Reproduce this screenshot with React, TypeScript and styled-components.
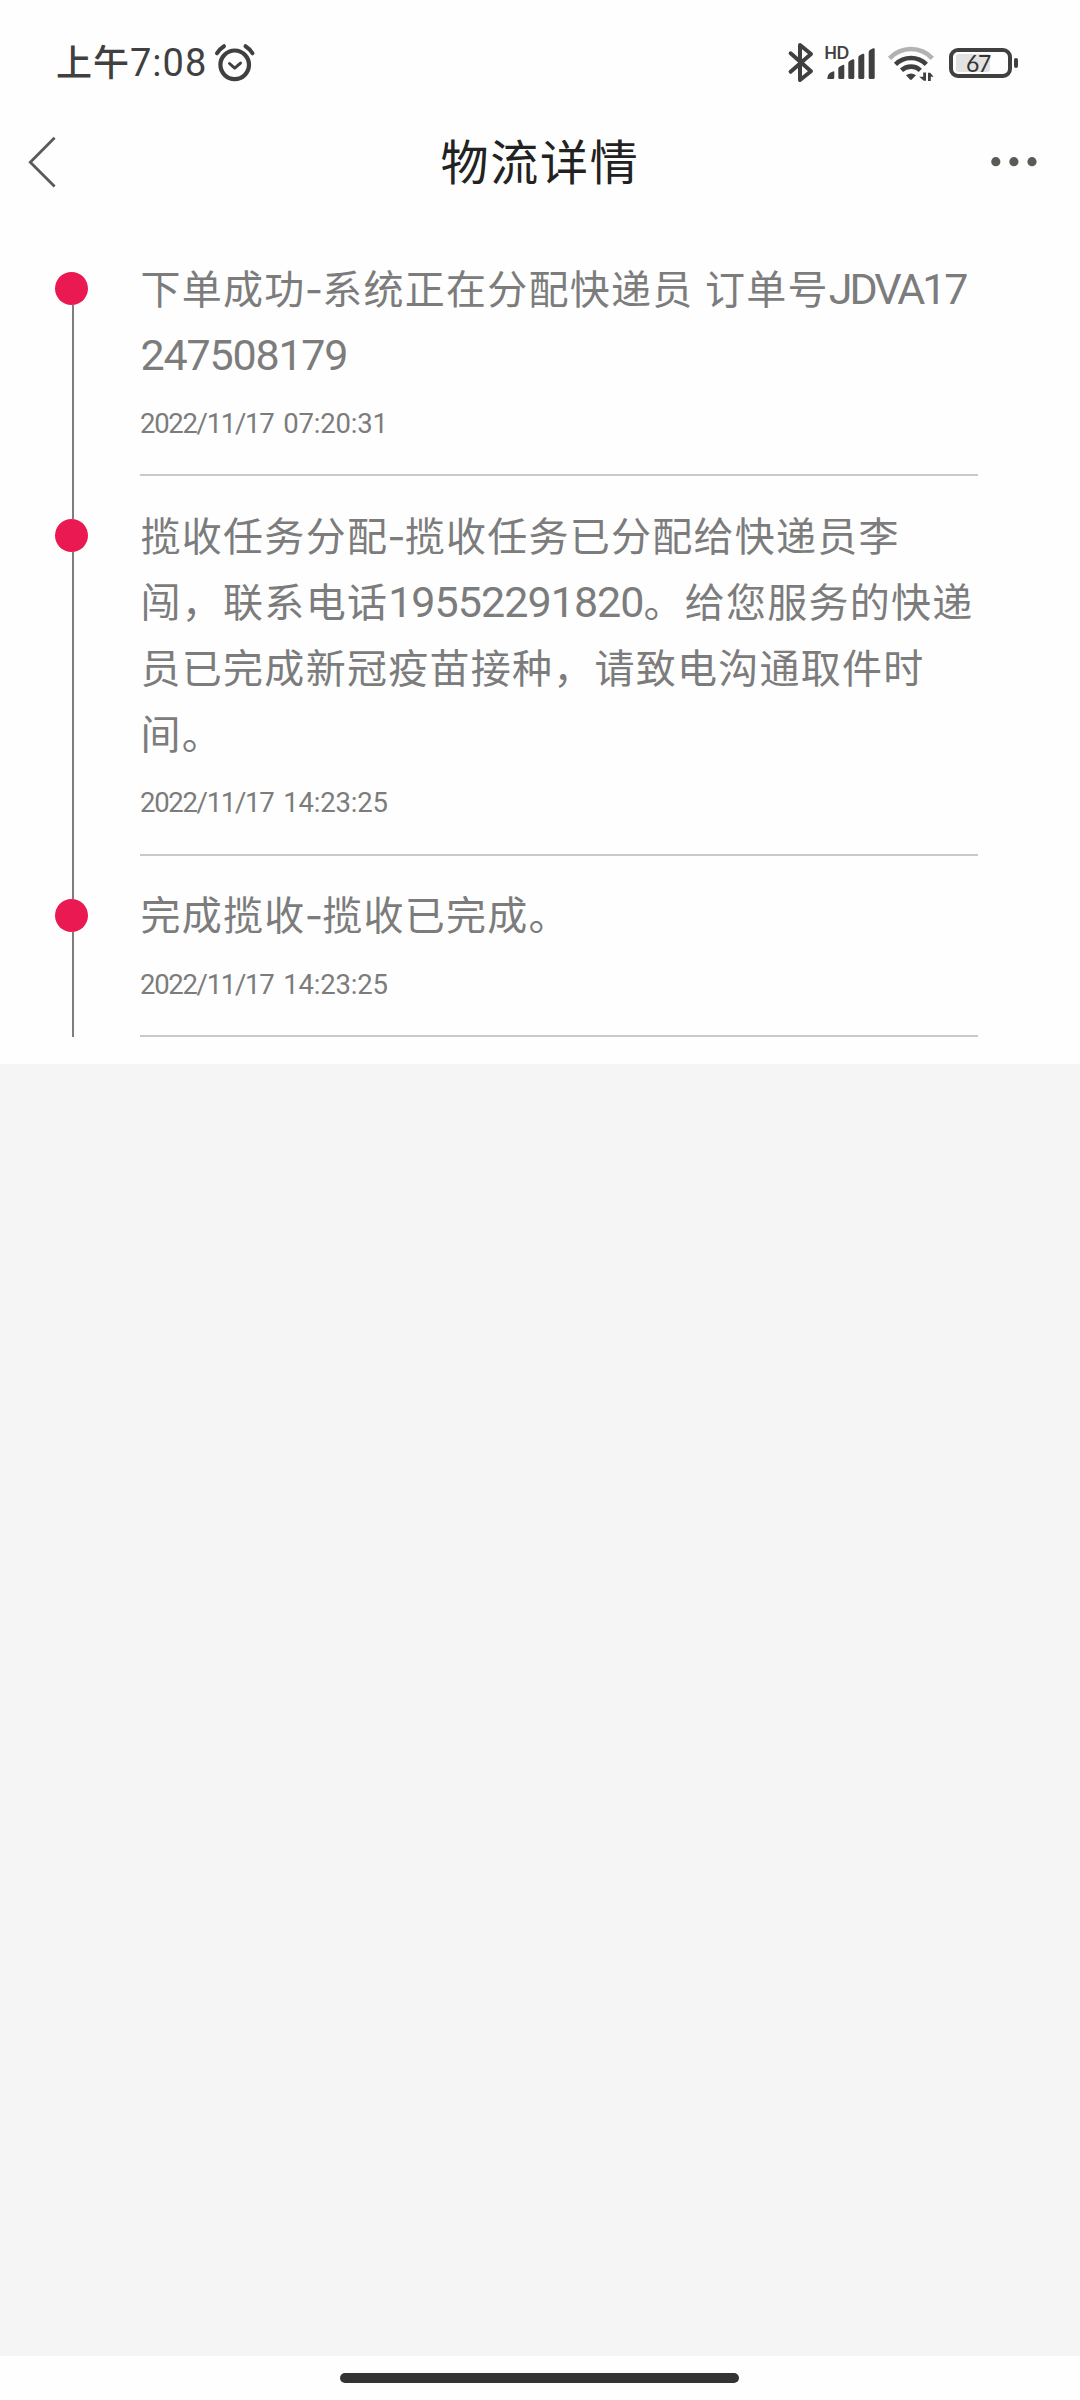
import React from 'react';
import styled, { createGlobalStyle } from 'styled-components';

const GlobalStyle = createGlobalStyle`
  * { box-sizing: border-box; }
  body {
    margin: 0;
    background: #f5f5f5;
    font-family: 'Noto Sans CJK SC', sans-serif;
  }
`;

const Screen = styled.div`
  width: 1080px;
  height: 2400px;
  display: flex;
  flex-direction: column;
  background: #f5f5f5;
  overflow: hidden;
`;

const StatusBar = styled.header`
  height: 110px;
  flex: none;
  display: flex;
  align-items: flex-start;
  justify-content: space-between;
  padding: 38px 62px 0 56px;
  background: #fefefe;
  color: #404040;
`;

const StatusGroup = styled.div`
  display: flex;
  align-items: center;
  height: 50px;
`;

const Clock = styled.div`
  display: flex;
  align-items: baseline;
  height: 50px;
  line-height: 45px;
  margin-right: 7px;
  font-size: 36px;
  letter-spacing: 1px;
  font-weight: 500;
  white-space: nowrap;
`;

const ClockDigits = styled.span`
  font-family: Roboto, sans-serif;
  font-size: 38px;
  font-weight: 400;
  letter-spacing: 1px;
`;

const Battery = styled.div`
  width: 63px;
  height: 30px;
  margin-left: 15px;
  border: 4px solid #404040;
  border-radius: 9px;
  padding: 2px 3px;
  display: flex;
`;

const BatteryFill = styled.div`
  width: 34px;
  height: 18px;
  border-radius: 3px;
  background: #e2e2e2;
  display: flex;
  justify-content: flex-end;
  align-items: center;
  font-family: Lato, sans-serif;
  font-size: 23px;
  letter-spacing: -1.4px;
  line-height: 18px;
  color: #333;
`;

const BatteryNub = styled.div`
  width: 4px;
  height: 10px;
  margin-left: 2px;
  border-radius: 2px;
  background: #404040;
`;

const NavBar = styled.nav`
  height: 119px;
  flex: none;
  display: grid;
  grid-template-columns: 120px 1fr 120px;
  align-items: start;
  background: #fefefe;
`;

const NavSlot = styled.div<{ $end?: boolean }>`
  height: 104px;
  display: flex;
  align-items: center;
  justify-content: ${(p) => (p.$end ? 'flex-end' : 'flex-start')};
  padding: ${(p) => (p.$end ? '0 43px 0 0' : '0 0 0 26px')};
`;

const Title = styled.h1`
  margin: 0;
  height: 104px;
  line-height: 98px;
  font-size: 48px;
  font-weight: 400;
  letter-spacing: 1.8px;
  text-align: center;
  color: #222;
`;

const Timeline = styled.main`
  height: 835px;
  flex: none;
  background: #fefefe;
`;

const Item = styled.section`
  display: grid;
  grid-template-columns: 140px 838px;
`;

const Rail = styled.div<{ $first: boolean }>`
  display: flex;
  flex-direction: column;
  margin-left: 55px;
  width: 36px;
  &::before {
    content: '';
    height: 43px;
    width: 2px;
    margin-left: 17px;
    background: ${(p) => (p.$first ? 'transparent' : '#7e7e7e')};
  }
  &::after {
    content: '';
    flex: 1;
    width: 2px;
    margin-left: 17px;
    background: #7e7e7e;
  }
`;

const Dot = styled.span`
  width: 33px;
  height: 33px;
  border-radius: 50%;
  background: #eb1951;
`;

const Body = styled.div`
  padding: 24.6px 0 30.3px;
  border-bottom: 2px solid #c9c9c9;
`;

const Line = styled.p`
  margin: 0;
  padding-left: 0.6px;
  height: 66px;
  line-height: 66px;
  font-size: 40px;
  letter-spacing: 1.26px;
  color: #7c7c7c;
  white-space: pre;
`;

const Latin = styled.span<{ $spacing: number }>`
  font-family: Roboto, sans-serif;
  font-size: 43px;
  line-height: 1;
  letter-spacing: ${(p) => p.$spacing}px;
`;

const Dash = styled.span`
  display: inline-block;
  width: 16.5px;
  line-height: 1;
  font-family: Inter, sans-serif;
  letter-spacing: 0;
  text-indent: -1px;
`;

const Time = styled.time`
  display: flex;
  gap: 10px;
  height: 40px;
  margin-top: 18.4px;
  line-height: 40px;
  font-family: Roboto, sans-serif;
  font-size: 27.5px;
  color: #7c7c7c;
`;

const Day = styled.span`
  letter-spacing: -1.3px;
`;

const Hour = styled.span`
  letter-spacing: -0.2px;
`;

const Spacer = styled.div`
  flex: 1;
`;

const HomeBar = styled.footer`
  height: 44px;
  flex: none;
  display: flex;
  justify-content: center;
  padding: 17px 1px 0 0;
  background: #fefefe;
`;

const HomeHandle = styled.div`
  width: 399px;
  height: 10px;
  border-radius: 5px;
  background: #333;
`;

const HdText = styled.text`
  font-family: Lato, sans-serif;
  font-size: 16.5px;
  font-weight: 700;
  letter-spacing: -0.5px;
`;

type Part = string | [string, number];

const records: { lines: Part[][]; day: string; hour: string }[] = [
  {
    lines: [
      ['下单成功', '-', '系统正在分配快递员', [' ', 0.9], '订单号', ['JDVA', -3], ['17', -2]],
      [['247508179', -1.2]],
    ],
    day: '2022/11/17',
    hour: '07:20:31',
  },
  {
    lines: [
      ['揽收任务分配', '-', '揽收任务已分配给快递员李'],
      ['闯，联系电话', ['19552291820', -0.95], '。给您服务的快递'],
      ['员已完成新冠疫苗接种，请致电沟通取件时'],
      ['间。'],
    ],
    day: '2022/11/17',
    hour: '14:23:25',
  },
  {
    lines: [['完成揽收', '-', '揽收已完成。']],
    day: '2022/11/17',
    hour: '14:23:25',
  },
];

const AlarmIcon = () => (
  <svg width="42" height="40" viewBox="0 0 42 40" fill="none" stroke="#404040" strokeLinecap="round">
    <circle cx="20.7" cy="21.8" r="14.3" strokeWidth="4.2" />
    <path d="M15.500 20.500l5.200 4.600 5.800-5" strokeWidth="3" strokeLinejoin="round" />
    <path d="M3 10.300Q5.500 6 10 3.200M31.500 3.200Q36 6 38.500 10.300" strokeWidth="4" />
  </svg>
);

const StatusIcons = () => (
  <svg width="150" height="50" viewBox="784 38 150 50" fill="#404040" overflow="visible">
    <path
      d="M790.6 53.3L811 71.3 800 80V45L811 54 790.6 71.8"
      fill="none"
      stroke="#404040"
      strokeWidth="4"
      strokeLinecap="round"
      strokeLinejoin="round"
    />
    <HdText x="824.3" y="59.3">HD</HdText>
    <path d="M827.3 79q0-6 5-7.300q2-.7 2-.2V77.500q0 1.500-1.500 1.500z" />
    <path d="M838.300 68.500q0-1.500 1.500-2l3-1.500q1.500-.5 1.500.8V77.500q0 1.500-1.500 1.500h-3q-1.500 0-1.500-1.500z" />
    <path d="M848.300 63q0-1.500 1.500-2.200l3-1.500q1.500-.5 1.500.8V77.500q0 1.500-1.500 1.500h-3q-1.500 0-1.500-1.500z" />
    <path d="M858.300 57.500q0-1.500 1.500-2.200l3-1.500q1.500-.5 1.500.8V77.500q0 1.500-1.500 1.500h-3q-1.500 0-1.500-1.500z" />
    <path d="M868.700 52q0-1.500 1.500-2.200l3-1.500q1.500-.5 1.500.8V77.500q0 1.500-1.500 1.500h-3q-1.500 0-1.500-1.500z" />
    <g fill="none" strokeWidth="4.600">
      <path d="M889.500 58.300Q898.500 49 911 49T932.300 58.300" stroke="#b2b2b2" />
      <path d="M895.500 64.300Q902 58 911 58T926.300 64.300" stroke="#404040" />
      <path d="M901.500 70.300Q905.500 66.600 911 66.600T920.300 70.300" stroke="#404040" />
    </g>
    <path d="M906 75.300Q911 71.500 916 75.300L911.800 79.500q-.9.800-1.800 0z" />
    <path d="M926 72.500v8.300h-2.200l-4.600-4h4V72.500z" />
    <path d="M928 81v-8.300h2.200l3.400 4h-2.800V81z" />
  </svg>
);

const BackIcon = () => (
  <svg width="34" height="54" viewBox="26 134 34 54" fill="none" stroke="#5a5a5a" strokeWidth="2.800">
    <path d="M54.600 136.800L30.300 161.200 54.600 185.400" />
  </svg>
);

const MoreIcon = () => (
  <svg width="46" height="12" viewBox="0 0 46 12" fill="#5b5b56">
    <circle cx="4.800" cy="5.700" r="4.600" />
    <circle cx="22.900" cy="5.700" r="4.600" />
    <circle cx="41" cy="5.700" r="4.600" />
  </svg>
);

const renderPart = (part: Part, key: number) => {
  if (part === '-') return <Dash key={key}>-</Dash>;
  if (typeof part === 'string') return part;
  return (
    <Latin key={key} $spacing={part[1]}>
      {part[0]}
    </Latin>
  );
};

export default function App() {
  return (
    <Screen>
      <GlobalStyle />
      <StatusBar>
        <StatusGroup>
          <Clock>
            上午<ClockDigits>7:08</ClockDigits>
          </Clock>
          <AlarmIcon />
        </StatusGroup>
        <StatusGroup>
          <StatusIcons />
          <Battery>
            <BatteryFill>67</BatteryFill>
          </Battery>
          <BatteryNub />
        </StatusGroup>
      </StatusBar>
      <NavBar>
        <NavSlot>
          <BackIcon />
        </NavSlot>
        <Title>物流详情</Title>
        <NavSlot $end>
          <MoreIcon />
        </NavSlot>
      </NavBar>
      <Timeline>
        {records.map((record, i) => (
          <Item key={i}>
            <Rail $first={i === 0}>
              <Dot />
            </Rail>
            <Body>
              {record.lines.map((line, j) => (
                <Line key={j}>{line.map(renderPart)}</Line>
              ))}
              <Time>
                <Day>{record.day}</Day>
                <Hour>{record.hour}</Hour>
              </Time>
            </Body>
          </Item>
        ))}
      </Timeline>
      <Spacer />
      <HomeBar>
        <HomeHandle />
      </HomeBar>
    </Screen>
  );
}
